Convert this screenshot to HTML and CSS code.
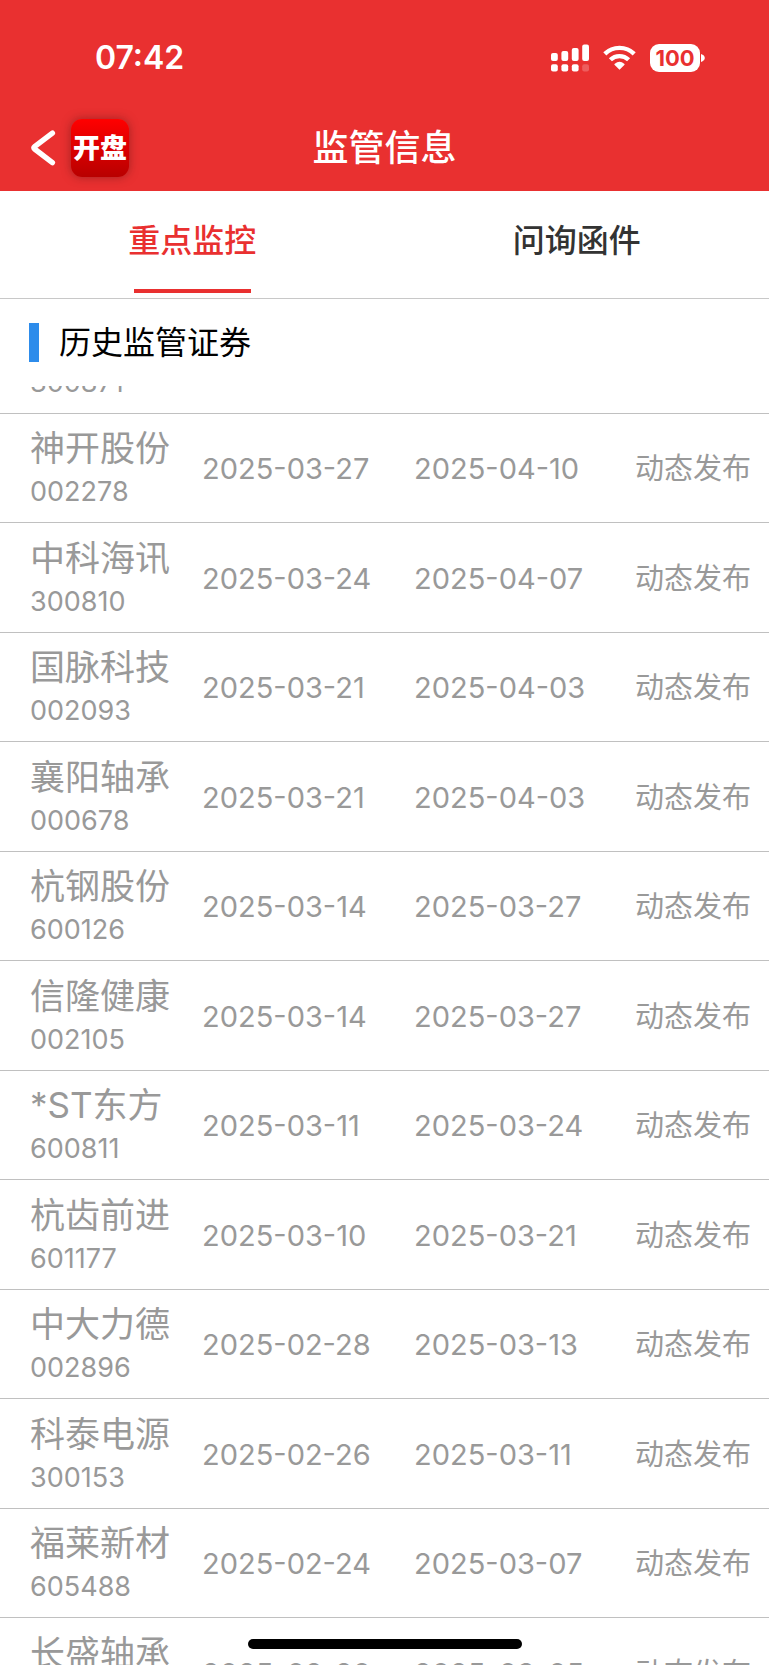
FILE: index.html
```html
<!DOCTYPE html>
<html lang="zh-CN">
<head>
<meta charset="utf-8">
<meta name="viewport" content="width=device-width, initial-scale=1">
<title>监管信息</title>
<link rel="stylesheet" href="styles.css">
</head>
<body>
<div class="app">
  <header class="header">
    <div class="status-bar">
      <time class="clock">07:42</time>
      <div class="indicators">
        <svg class="signal" width="38" height="28" viewBox="0 0 38 28" fill="#fff" aria-hidden="true">
          <rect x="0" y="9" width="6.8" height="8" rx="2"/>
          <rect x="10.4" y="7" width="6.8" height="10" rx="2"/>
          <rect x="20.8" y="4" width="6.8" height="13" rx="2"/>
          <rect x="31.2" y="0.6" width="6.8" height="16.4" rx="2"/>
          <rect x="0" y="20.2" width="6.8" height="7.4" rx="2"/>
          <rect x="10.4" y="20.2" width="6.8" height="7.4" rx="2"/>
          <rect x="20.8" y="20.2" width="6.8" height="7.4" rx="2"/>
          <rect x="31.2" y="20.2" width="6.8" height="7.4" rx="2" opacity=".22"/>
        </svg>
        <svg class="wifi" width="33" height="28" viewBox="0 0 33 28" aria-hidden="true">
          <g fill="none" stroke="#fff" stroke-width="4.4">
            <path d="M1.8 9.8a21.2 21.2 0 0 1 29.4 0"/>
            <path d="M7.4 15.8a13 13 0 0 1 18.2 0"/>
          </g>
          <path d="M16.5 25.8l-4.8-4.7c-.5-.5-.4-1 .1-1.4a7.4 7.4 0 0 1 9.4 0c.5.4.6.9.1 1.4z" fill="#fff"/>
        </svg>
        <div class="battery">
          <span class="battery-level">100</span>
          <svg width="4" height="8" viewBox="0 0 4 8" aria-hidden="true"><path d="M0 0c2.4.8 3.8 2.2 3.8 4S2.4 7.2 0 8z" fill="#fff"/></svg>
        </div>
      </div>
    </div>
    <div class="nav-bar">
      <div class="nav-left">
        <button class="back" type="button" aria-label="返回">
          <svg width="26" height="38" viewBox="0 0 26 38" fill="none" stroke="#fff" stroke-width="5.4" stroke-linecap="round" stroke-linejoin="round" aria-hidden="true"><path d="M22.4 4.2L4.6 17.6q-1.6 1.2 0 2.4l17.800 13.600"/></svg>
        </button>
        <a class="logo" href="#">开盘</a>
      </div>
      <h1 class="title">监管信息</h1>
    </div>
  </header>
  <nav class="tabs">
    <button class="tab tab-active" type="button">重点监控</button>
    <button class="tab" type="button">问询函件</button>
  </nav>
  <h2 class="section-title">历史监管证券</h2>
  <main class="list" id="list">
    <table class="records">
      <colgroup><col class="col-name"><col class="col-start"><col class="col-end"><col class="col-link"></colgroup>
      <tbody>
        <tr><td><div class="name">回盛生物</div><div class="code">300871</div></td><td>2025-03-28</td><td>2025-04-11</td><td>动态发布</td></tr>
        <tr><td><div class="name">神开股份</div><div class="code">002278</div></td><td>2025-03-27</td><td>2025-04-10</td><td>动态发布</td></tr>
        <tr><td><div class="name">中科海讯</div><div class="code">300810</div></td><td>2025-03-24</td><td>2025-04-07</td><td>动态发布</td></tr>
        <tr><td><div class="name">国脉科技</div><div class="code">002093</div></td><td>2025-03-21</td><td>2025-04-03</td><td>动态发布</td></tr>
        <tr><td><div class="name">襄阳轴承</div><div class="code">000678</div></td><td>2025-03-21</td><td>2025-04-03</td><td>动态发布</td></tr>
        <tr><td><div class="name">杭钢股份</div><div class="code">600126</div></td><td>2025-03-14</td><td>2025-03-27</td><td>动态发布</td></tr>
        <tr><td><div class="name">信隆健康</div><div class="code">002105</div></td><td>2025-03-14</td><td>2025-03-27</td><td>动态发布</td></tr>
        <tr><td><div class="name">*ST东方</div><div class="code">600811</div></td><td>2025-03-11</td><td>2025-03-24</td><td>动态发布</td></tr>
        <tr><td><div class="name">杭齿前进</div><div class="code">601177</div></td><td>2025-03-10</td><td>2025-03-21</td><td>动态发布</td></tr>
        <tr><td><div class="name">中大力德</div><div class="code">002896</div></td><td>2025-02-28</td><td>2025-03-13</td><td>动态发布</td></tr>
        <tr><td><div class="name">科泰电源</div><div class="code">300153</div></td><td>2025-02-26</td><td>2025-03-11</td><td>动态发布</td></tr>
        <tr><td><div class="name">福莱新材</div><div class="code">605488</div></td><td>2025-02-24</td><td>2025-03-07</td><td>动态发布</td></tr>
        <tr><td><div class="name">长盛轴承</div><div class="code">300718</div></td><td>2025-02-20</td><td>2025-03-05</td><td>动态发布</td></tr>
      </tbody>
    </table>
  </main>
  <div class="home-indicator"></div>
</div>
<script src="script.js"></script>
</body>
</html>
```
FILE: styles.css
```css
* { box-sizing: border-box; }

body {
  margin: 0;
  background: #fff;
  color: #000;
  font-family: Inter, "Noto Sans CJK SC", sans-serif;
}

button {
  border: 0;
  padding: 0;
  background: none;
  font: inherit;
  color: inherit;
}

.app {
  position: relative;
  display: flex;
  flex-direction: column;
  height: 100vh;
  overflow: hidden;
}

.header {
  background: #e93030;
  color: #fff;
}

.status-bar {
  display: flex;
  justify-content: space-between;
  align-items: center;
  height: 105px;
  padding: 10px 64px 0 95px;
}

.clock {
  font-size: 32px;
  font-weight: 600;
  line-height: 40px;
}

.indicators,
.battery {
  display: flex;
  align-items: center;
}

.indicators { gap: 14px; }
.battery { gap: 1px; }

.battery-level {
  width: 50px;
  border-radius: 9px;
  background: #fff;
  color: #e93030;
  font-size: 22px;
  font-weight: 700;
  line-height: 28px;
  text-align: center;
}

.nav-bar {
  display: grid;
  grid-template-columns: 1fr auto 1fr;
  align-items: center;
  height: 86px;
  padding: 0 30px;
}

.nav-left {
  display: flex;
  align-items: center;
  gap: 15px;
}

.back svg { display: block; }

.logo {
  width: 58px;
  padding-top: 2px;
  border-radius: 11px;
  background: linear-gradient(#f00, #b80000);
  box-shadow: 0 0 10px rgba(90, 20, 20, .5);
  color: #fff;
  font-size: 27px;
  font-weight: 900;
  line-height: 56px;
  text-align: center;
  text-decoration: none;
}

.title {
  margin: 0;
  font-size: 36px;
  font-weight: 500;
  line-height: 48px;
}

.tabs {
  display: flex;
  flex: none;
  height: 108px;
  border-bottom: 1px solid #c8c8c8;
}

.tab {
  display: flex;
  flex: 1;
  flex-direction: column;
  align-items: center;
  justify-content: space-between;
  padding: 26px 0 5px;
  color: #333;
  font-size: 32px;
  font-weight: 500;
  line-height: 48px;
}

.tab::after {
  width: 117px;
  height: 4px;
  content: "";
}

.tab-active { color: #e93030; }
.tab-active::after { background: #e93030; }

.section-title {
  display: flex;
  flex: none;
  align-items: center;
  gap: 20px;
  height: 87px;
  margin: 0;
  padding-left: 29px;
  font-size: 32px;
  font-weight: 400;
  line-height: 39px;
}

.section-title::before {
  width: 10px;
  height: 39px;
  background: #2d8ceb;
  content: "";
}

.list {
  flex: 1;
  min-height: 0;
  overflow-y: auto;
  scrollbar-width: none;
}

.records {
  width: 100%;
  border-collapse: separate;
  border-spacing: 0;
  table-layout: fixed;
  color: #999;
  font-size: 29px;
}

.col-name { width: 202px; }
.col-start { width: 212px; }
.col-end { width: 205px; }
.col-link { width: 150px; }

.records tr { height: 110px; }
.records tr:nth-child(even) { height: 109px; }

.records td {
  padding: 2px 0 0;
  border-bottom: 1px solid #c0c0c0;
  line-height: 44px;
  white-space: nowrap;
}

.records td:first-child { padding: 12px 0 8px 30px; }
.records td:last-child {
  padding-right: 18px;
  text-align: right;
}

.name { font-size: 35px; }
.code { font-size: 27px; }

.home-indicator {
  position: absolute;
  bottom: 16px;
  left: 50%;
  width: 274px;
  height: 10px;
  margin-left: -137px;
  border-radius: 5px;
  background: #000;
}
```
FILE: script.js
```js
// Open the list part-way down.
document.getElementById("list").scrollTop = 82;
```
